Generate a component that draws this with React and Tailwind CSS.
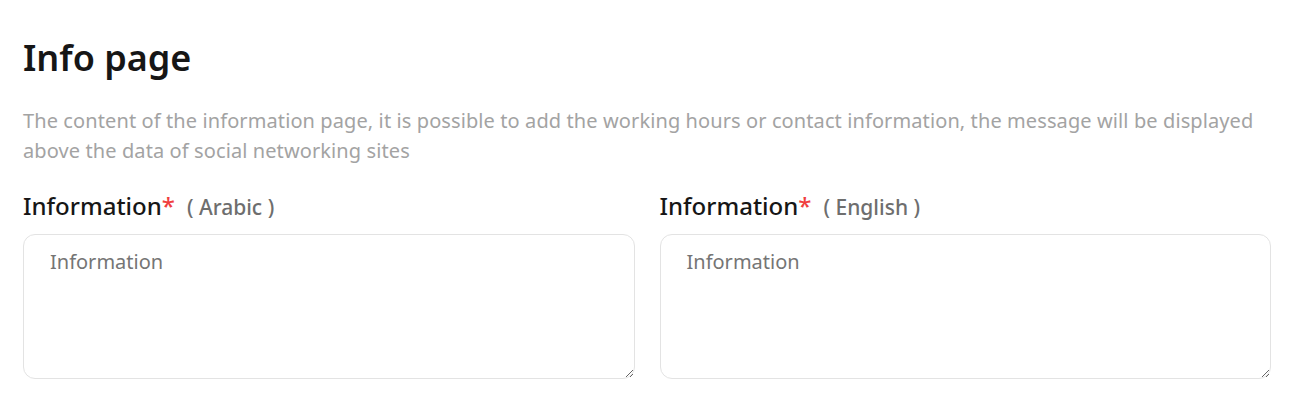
import React from "react";

const FIELDS = [
  { label: "Information", lang: "Arabic" },
  { label: "Information", lang: "English" },
];

export default function App() {
  return (
    <div
      className="min-h-screen bg-white pl-[23px] pr-[25px] pt-[38px]"
      style={{ fontFamily: '"Noto Sans", sans-serif' }}
    >
      <h1 className="text-[36px] leading-[40px] font-semibold text-[#161616]">
        Info page
      </h1>
      <p className="mt-[28px] text-[20px] leading-[30px] tracking-[0.1px] text-[#a3a3a3]">
        The content of the information page, it is possible to add the working
        hours or contact information, the message will be displayed above the
        data of social networking sites
      </p>

      <div className="mt-[24px] grid grid-cols-2 gap-[25px]">
        {FIELDS.map((f, i) => (
          <div key={i} className="flex flex-col">
            <label className="flex h-[32px] items-baseline text-[24px] leading-[32px] font-medium text-[#161616]">
              {f.label}
              <span className="text-[#f03e3e]">*</span>
              <span className="ml-3 text-[21px] font-medium text-[#6e6e6e]">
                ( {f.lang} )
              </span>
            </label>
            <textarea
              placeholder="Information"
              className="mt-[12px] h-[145px] w-full rounded-xl border border-[#e3e3e3] pl-[26px] pr-6 py-3 text-[20px] leading-[30px] text-[#333] placeholder:text-[#757575] outline-none"
            />
          </div>
        ))}
      </div>
    </div>
  );
}
